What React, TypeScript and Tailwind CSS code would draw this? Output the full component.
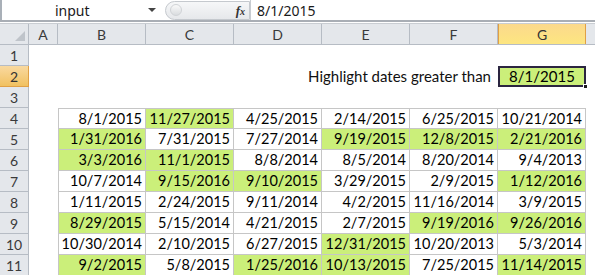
import React from 'react';

const cols = ['A', 'B', 'C', 'D', 'E', 'F', 'G'];
const widths = [29, 88, 88, 88, 88, 88, 88];

const data: string[][] = [
  ['8/1/2015', '11/27/2015', '4/25/2015', '2/14/2015', '6/25/2015', '10/21/2014'],
  ['1/31/2016', '7/31/2015', '7/27/2014', '9/19/2015', '12/8/2015', '2/21/2016'],
  ['3/3/2016', '11/1/2015', '8/8/2014', '8/5/2014', '8/20/2014', '9/4/2013'],
  ['10/7/2014', '9/15/2016', '9/10/2015', '3/29/2015', '2/9/2015', '1/12/2016'],
  ['1/11/2015', '2/24/2015', '9/11/2014', '4/2/2015', '11/16/2014', '3/9/2015'],
  ['8/29/2015', '5/15/2014', '4/21/2015', '2/7/2015', '9/19/2016', '9/26/2016'],
  ['10/30/2014', '2/10/2015', '6/27/2015', '12/31/2015', '10/20/2013', '5/3/2014'],
  ['9/2/2015', '5/8/2015', '1/25/2016', '10/13/2015', '7/25/2015', '11/14/2015'],
];

// conditional format: date > 8/1/2015
const isAfter = (s: string) => {
  const [m, d, y] = s.split('/').map(Number);
  return new Date(y, m - 1, d) > new Date(2015, 7, 1);
};

function RowHeader({ n, active }: { n: number; active?: boolean }) {
  return (
    <div
      className={
        'w-[29px] shrink-0 h-full flex items-center justify-center text-[14px] border-r border-b ' +
        (active
          ? 'bg-gradient-to-b from-[#f9d99f] to-[#f1c15f] border-[#e0a045] text-[#333]'
          : 'bg-[#e4e7eb] border-[#b6bcc4] text-[#3a3a3a]')
      }
    >
      {n}
    </div>
  );
}

export default function App() {
  return (
    <div className="w-[595px] h-[275px] overflow-hidden bg-white font-['Lato',sans-serif] text-[14px] text-black">
      {/* formula bar */}
      <div className="h-[20px] flex items-center border-l-2 border-[#a9b0b8]">
        <div className="w-[146px] h-full flex items-center pl-[53px] text-[#1a1a1a] text-[14px] font-['Noto_Sans',sans-serif]">input</div>
        <svg width="8" height="5" viewBox="0 0 8 5" className="mr-[9px]">
          <path d="M0 0h8L4 4z" fill="#444" />
        </svg>
        <div className="relative w-[85px] h-[19px] rounded-l-full bg-gradient-to-b from-[#f6f7f8] to-[#e6e8eb] border border-[#c5c9ce] flex items-center">
          <div className="ml-[4px] w-[12px] h-[12px] rounded-full bg-gradient-to-b from-[#fafafa] to-[#d9dcdf] border border-[#d0d3d6]" />
          <span className="ml-auto mr-[4px] font-['Liberation_Serif',serif] italic font-bold text-[13px] text-[#333] leading-none">
            f<span className="text-[10px]">x</span>
          </span>
        </div>
        <div className="w-[1px] h-full bg-[#c8ccd1]" />
        <div className="pl-[6px] text-[14px] text-[#1a1a1a] font-['Noto_Sans',sans-serif]">8/1/2015</div>
      </div>
      <div className="h-[4px] border-t-2 border-[#a9aeb5] bg-white border-b border-b-[#c9cdd2]" />

      {/* column headers */}
      <div className="h-[21px] flex bg-[#e4e7eb] border-b border-[#b6bcc4]">
        <div className="w-[29px] shrink-0 h-full border-r border-[#b6bcc4] relative">
          <svg width="10" height="10" className="absolute right-[3px] bottom-[3px]">
            <path d="M10 0V10H0z" fill="#bfc4ca" />
          </svg>
        </div>
        {cols.map((c, i) => (
          <div
            key={c}
            style={{ width: widths[i] }}
            className={
              'shrink-0 h-full flex items-center justify-center border-r ' +
              (c === 'G'
                ? 'bg-gradient-to-b from-[#fbd98c] to-[#fde680] border-[#e0a045] border-x text-[#333]'
                : 'border-[#b6bcc4] text-[#3a3a3a]')
            }
          >
            {c}
          </div>
        ))}
        <div className="flex-1" />
      </div>

      {/* rows 1-3 */}
      <div className="h-[21px] flex">
        <RowHeader n={1} />
      </div>
      <div className="h-[21px] flex">
        <RowHeader n={2} active />
        <div className="w-[469px] shrink-0 flex items-center justify-end pr-[7px] text-[15px] text-[#111]">
          Highlight dates greater than
        </div>
        <div className="relative w-[88px] shrink-0 h-full bg-[#cbef7a] border-2 border-[#2b2540] flex items-center justify-center text-[15px]">
          8/1/2015
          <div className="absolute right-[-4px] bottom-[-4px] w-[5px] h-[5px] bg-[#1b1b1b] border border-white" />
        </div>
      </div>
      <div className="h-[21px] flex">
        <RowHeader n={3} />
      </div>

      {/* data table B4:G11 */}
      {data.map((row, r) => (
        <div key={r} className="h-[21px] flex">
          <RowHeader n={r + 4} />
          <div className="w-[29px] shrink-0" />
          {row.map((v, c) => (
            <div
              key={c}
              className={
                'w-[88px] shrink-0 h-full flex items-center justify-end pr-[3px] border-r border-b border-[#c6c6c6] text-[14.5px] ' +
                (r === 0 ? 'border-t ' : '') +
                (c === 0 ? 'border-l ' : '') +
                (isAfter(v) ? 'bg-[#cbef7a]' : 'bg-white')
              }
            >
              {v}
            </div>
          ))}
        </div>
      ))}
    </div>
  );
}
